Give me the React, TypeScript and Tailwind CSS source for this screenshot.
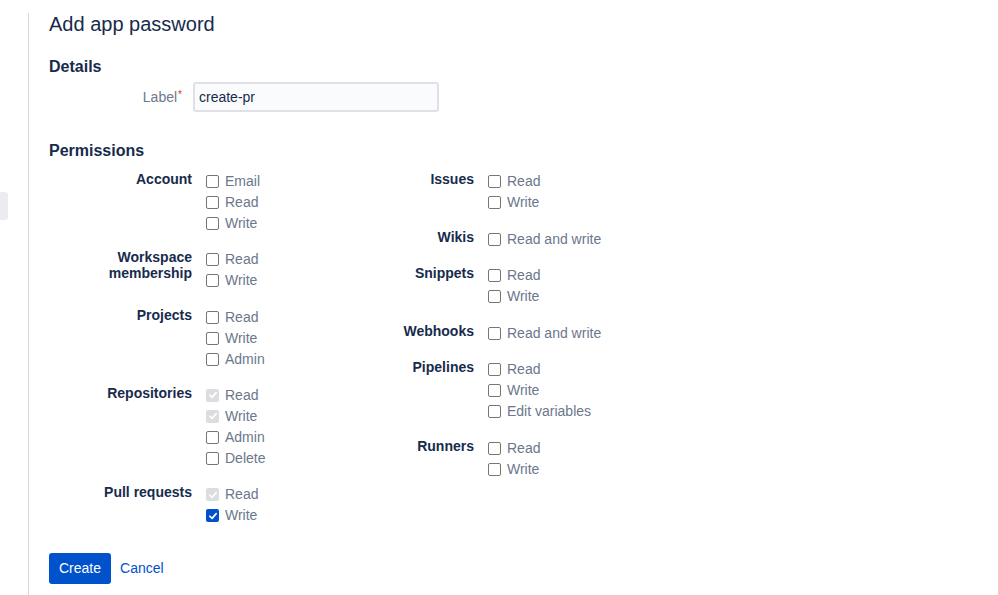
import { ReactNode } from "react"

type Option = {
    label: string,
    state?: "off" | "on" | "locked"
}

type Group = {
    title: ReactNode,
    options: Option[]
}

const leftGroups: Group[] = [
    { title: "Account", options: [{ label: "Email" }, { label: "Read" }, { label: "Write" }] },
    { title: <>Workspace<br />membership</>, options: [{ label: "Read" }, { label: "Write" }] },
    { title: "Projects", options: [{ label: "Read" }, { label: "Write" }, { label: "Admin" }] },
    {
        title: "Repositories",
        options: [
            { label: "Read", state: "locked" },
            { label: "Write", state: "locked" },
            { label: "Admin" },
            { label: "Delete" },
        ],
    },
    { title: "Pull requests", options: [{ label: "Read", state: "locked" }, { label: "Write", state: "on" }] },
]

const rightGroups: Group[] = [
    { title: "Issues", options: [{ label: "Read" }, { label: "Write" }] },
    { title: "Wikis", options: [{ label: "Read and write" }] },
    { title: "Snippets", options: [{ label: "Read" }, { label: "Write" }] },
    { title: "Webhooks", options: [{ label: "Read and write" }] },
    { title: "Pipelines", options: [{ label: "Read" }, { label: "Write" }, { label: "Edit variables" }] },
    { title: "Runners", options: [{ label: "Read" }, { label: "Write" }] },
]

const Tick = () => (
    <svg viewBox="0 0 12 12" className="w-[10px] h-[10px]">
        <path d="M2.2 6.3 L4.9 8.9 L9.8 3.2" fill="none" stroke="white" strokeWidth="2" strokeLinecap="round" strokeLinejoin="round" />
    </svg>
)

const Box = ({ state = "off" }: { state?: Option["state"] }) => {
    if (state === "on") {
        return (
            <span className="w-[13px] h-[13px] rounded-[2px] bg-[#0052cc] flex items-center justify-center">
                <Tick />
            </span>
        )
    }
    if (state === "locked") {
        return (
            <span className="w-[13px] h-[13px] rounded-[2px] bg-[#dcdde0] flex items-center justify-center">
                <Tick />
            </span>
        )
    }
    return <span className="w-[13px] h-[13px] rounded-[2px] border border-[#767676] bg-white" />
}

const PermissionGroup = ({ group }: { group: Group }) => (
    <div className="flex">
        <div className="w-[143px] text-right text-[14px] leading-[16px] font-bold text-[#172b4d]">
            {group.title}
        </div>
        <div className="flex flex-col ml-[14px]">
            {group.options.map((opt, i) => (
                <div key={`opt${i}`} className="flex items-center h-[21px]">
                    <Box state={opt.state} />
                    <span className="ml-[6px] text-[14px] text-[#6b778c]">{opt.label}</span>
                </div>
            ))}
        </div>
    </div>
)

export default function App() {
    return (
        <div className="flex w-full min-h-[595px] bg-white" style={{ fontFamily: '"Liberation Sans", Arial, sans-serif' }}>
            {/* left rail */}
            <div className="w-[28px] shrink-0 pt-[192px]">
                <div className="w-[8px] h-[28px] bg-[#ebecf0] rounded-r-[3px]" />
            </div>

            {/* main */}
            <div className="mt-[13px] border-l border-[#d5d8de] pl-[20px] flex-1 pb-[11px]">
                <h1 className="text-[20px] leading-[22px] text-[#172b4d]">Add app password</h1>

                <h2 className="mt-[22px] text-[16px] leading-[20px] font-bold text-[#172b4d]">Details</h2>
                <div className="mt-[5px] flex items-center">
                    <div className="w-[133px] text-right text-[14px] text-[#6b778c]">
                        Label<span className="ml-[1px] text-[#de350b] text-[10px] align-top">*</span>
                    </div>
                    <div className="ml-[11px] w-[246px] h-[30px] rounded-[3px] border-2 border-[#dfe1e6] bg-[#fafbfc] flex items-center px-[4px] text-[14px] text-[#172b4d]">
                        create-pr
                    </div>
                </div>

                <h2 className="mt-[29px] text-[16px] leading-[20px] font-bold text-[#172b4d]">Permissions</h2>
                <div className="mt-[10px] flex">
                    <div className="w-[282px] flex flex-col gap-[15.25px]">
                        {leftGroups.map((g, i) => <PermissionGroup group={g} key={`l${i}`} />)}
                    </div>
                    <div className="w-[282px] flex flex-col gap-[15.5px]">
                        {rightGroups.map((g, i) => <PermissionGroup group={g} key={`r${i}`} />)}
                    </div>
                </div>

                <div className="mt-[27px] flex items-center gap-[9px]">
                    <button className="h-[31px] px-[10px] rounded-[3px] bg-[#0052cc] text-white text-[14px]">Create</button>
                    <button className="text-[14px] text-[#0052cc]">Cancel</button>
                </div>
            </div>
        </div>
    )
}
